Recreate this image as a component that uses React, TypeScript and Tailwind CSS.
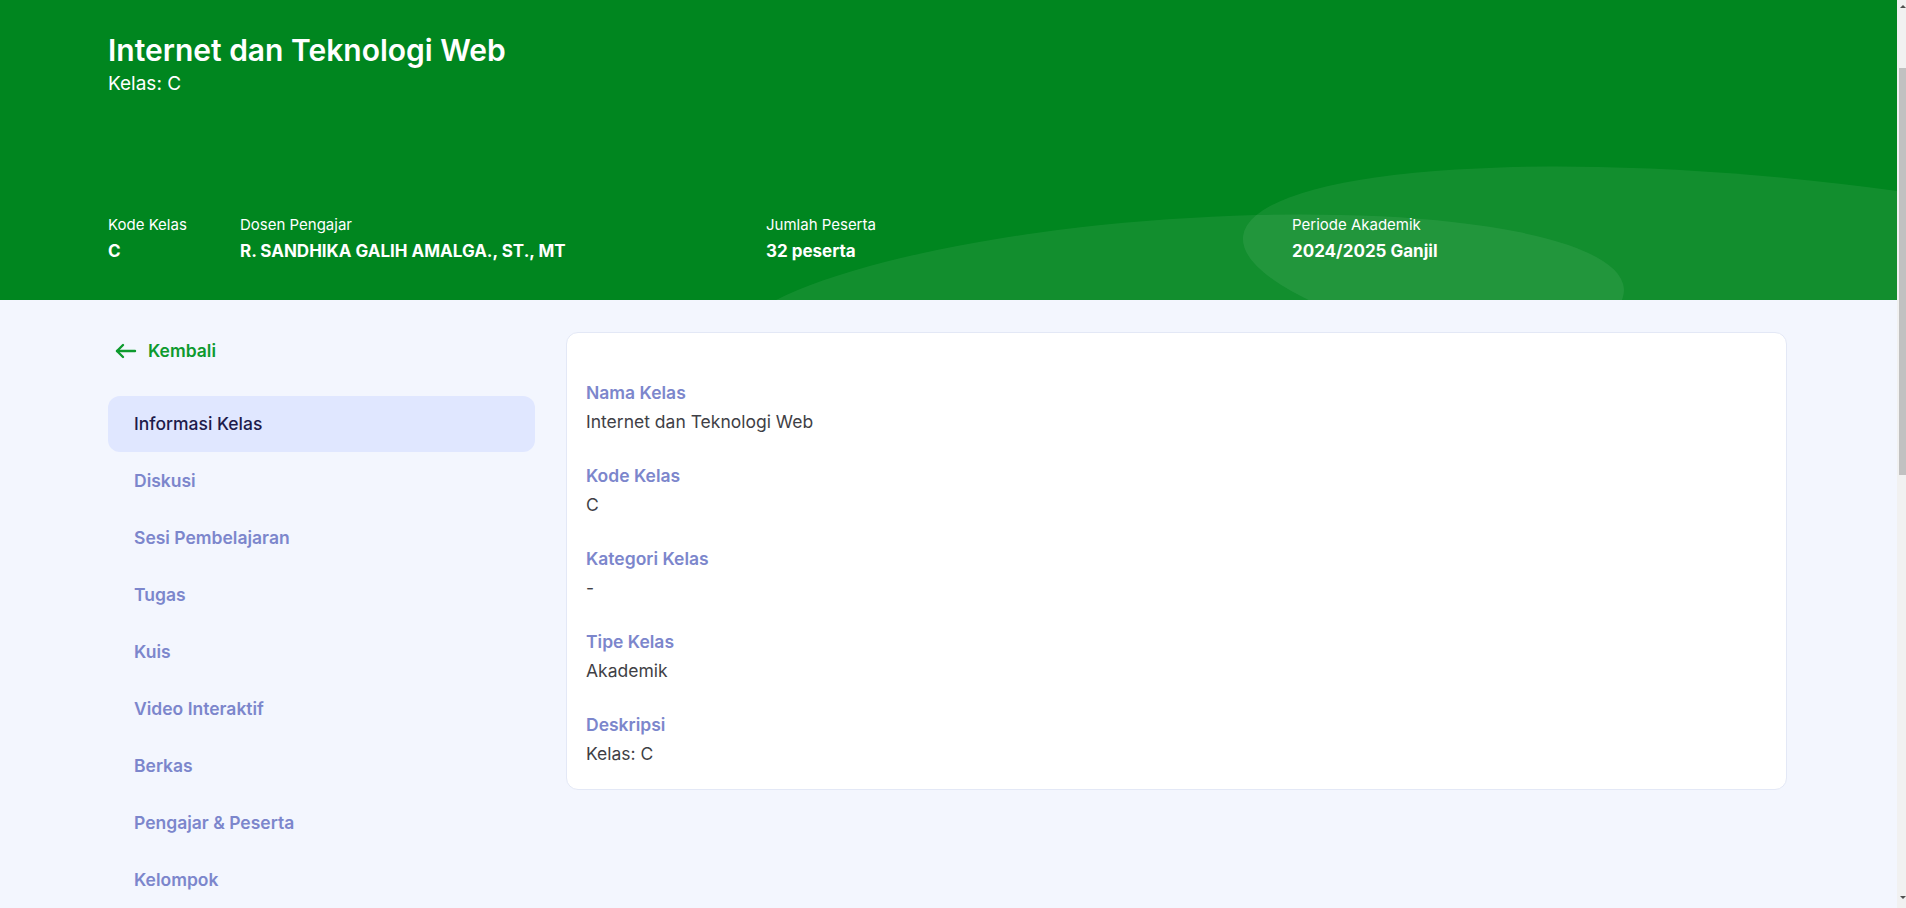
import React from "react";

const navItems = [
  "Informasi Kelas",
  "Diskusi",
  "Sesi Pembelajaran",
  "Tugas",
  "Kuis",
  "Video Interaktif",
  "Berkas",
  "Pengajar & Peserta",
  "Kelompok",
];

const fields = [
  { label: "Nama Kelas", value: "Internet dan Teknologi Web" },
  { label: "Kode Kelas", value: "C" },
  { label: "Kategori Kelas", value: "-" },
  { label: "Tipe Kelas", value: "Akademik" },
  { label: "Deskripsi", value: "Kelas: C" },
];

const stats = [
  { label: "Kode Kelas", value: "C" },
  { label: "Dosen Pengajar", value: "R. SANDHIKA GALIH AMALGA., ST., MT" },
  { label: "Jumlah Peserta", value: "32 peserta" },
  { label: "Periode Akademik", value: "2024/2025 Ganjil" },
];

export default function App() {
  return (
    <div className="flex h-[908px] w-full overflow-hidden font-['Inter','Noto_Sans',sans-serif]">
      <div className="min-w-0 flex-1 overflow-hidden bg-[#f3f6fe]">
        <header className="relative h-[300px] overflow-hidden bg-[#00861f] px-[108px] pt-8">
          <svg
            className="pointer-events-none absolute inset-0 h-full w-full"
            viewBox="0 0 1897 300"
            preserveAspectRatio="none"
          >
            <ellipse
              cx="1800"
              cy="295"
              rx="560"
              ry="115"
              transform="rotate(6 1800 295)"
              fill="#ffffff"
              fillOpacity="0.07"
            />
            <ellipse
              cx="1175"
              cy="320"
              rx="450"
              ry="101"
              transform="rotate(-4 1175 320)"
              fill="#ffffff"
              fillOpacity="0.07"
            />
          </svg>
          <div className="relative text-white">
            <h1 className="text-[30px] font-semibold leading-9">Internet dan Teknologi Web</h1>
            <p className="mt-0.5 text-[19px] leading-7">Kelas: C</p>
            <div className="mt-[117px] grid grid-cols-[132px_526px_526px_1fr]">
              {stats.map((s) => (
                <div key={s.label}>
                  <div className="text-[15px] leading-5">{s.label}</div>
                  <div className="mt-1 text-[17px] font-bold leading-6">{s.value}</div>
                </div>
              ))}
            </div>
          </div>
        </header>
        <main className="flex gap-[31px] px-[108px] pr-[110px] pt-8">
          <aside className="w-[427px] shrink-0">
            <button className="mt-px flex h-9 items-center gap-[10px] pl-[6px] text-[17.5px] font-semibold text-[#0d9a2e]">
              <svg width="24" height="24" viewBox="0 0 24 24" fill="none" stroke="currentColor" strokeWidth="2.4" strokeLinecap="round" strokeLinejoin="round">
                <path d="M21 12H3" />
                <path d="M9 6l-6 6 6 6" />
              </svg>
              Kembali
            </button>
            <nav className="mt-[27px] flex flex-col gap-px">
              {navItems.map((item, i) => (
                <div
                  key={item}
                  className={
                    i === 0
                      ? "flex h-14 items-center rounded-xl bg-[#e0e7ff] px-[26px] text-[17.5px] font-medium text-[#1e1b4b]"
                      : "flex h-14 items-center rounded-xl px-[26px] text-[17.5px] font-semibold text-[#7c86cc]"
                  }
                >
                  {item}
                </div>
              ))}
            </nav>
          </aside>
          <section className="min-w-0 flex-1">
            <div className="rounded-xl border border-[#e3e8f6] bg-white px-[19px] pb-[23px] pt-12">
              <div className="flex flex-col gap-[30px]">
                {fields.map((f) => (
                  <div key={f.label}>
                    <div className="text-[17.5px] font-semibold leading-6 text-[#7c86cc]">{f.label}</div>
                    <div className="mt-[5px] text-[17.5px] leading-6 text-[#3f3f46]">{f.value}</div>
                  </div>
                ))}
              </div>
            </div>
          </section>
        </main>
      </div>
      <div className="flex w-[9px] shrink-0 flex-col bg-[#f1f1f1]">
        <div className="flex h-[17px] items-start justify-end pt-[5px]">
          <div className="h-0 w-0 border-x-[3px] border-b-[3px] border-x-transparent border-b-[#505050]" />
        </div>
        <div className="ml-[2px] mt-[51px] h-[407px] bg-[#c1c1c1]" />
        <div className="flex-1" />
        <div className="flex h-[14px] items-start justify-end pt-[2px]">
          <div className="h-0 w-0 border-x-[3px] border-t-[3px] border-x-transparent border-t-[#505050]" />
        </div>
      </div>
    </div>
  );
}
